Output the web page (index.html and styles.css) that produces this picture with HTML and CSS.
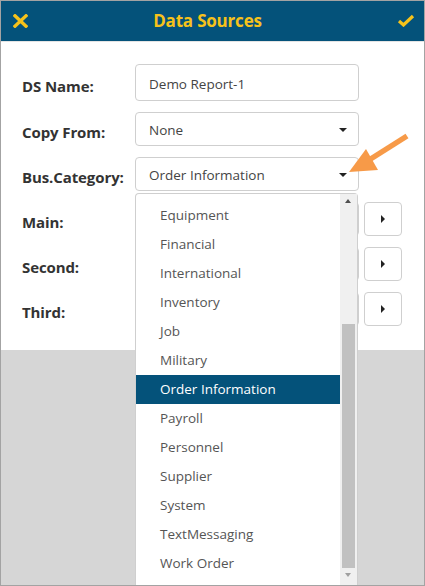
FILE: index.html
```html
<!DOCTYPE html>
<html>
<head>
<meta charset="utf-8">
<link rel="stylesheet" href="styles.css">
</head>
<body>
<div class="frame">
  <header class="bar">
    <svg class="bar-icon" width="15" height="14" viewBox="0 0 15 14"><path d="M2 1.8 L13 12.2 M13 1.8 L2 12.2" stroke="#f6c21b" stroke-width="3.3" stroke-linecap="square" fill="none"/></svg>
    <h1 class="title">Data Sources</h1>
    <svg class="bar-icon" width="18" height="13" viewBox="0 0 18 13"><path d="M2 7 L6.5 11 L16 2" stroke="#f6c21b" stroke-width="3.2" fill="none"/></svg>
  </header>
  <section class="panel">
    <div class="row">
      <label class="label">DS Name:</label>
      <div class="field tall">Demo Report-1</div>
    </div>
    <div class="row">
      <label class="label">Copy From:</label>
      <div class="field select">None<span class="caret"></span></div>
    </div>
    <div class="row">
      <label class="label">Bus.Category:</label>
      <div class="field select">Order Information<span class="caret"></span></div>
    </div>
    <div class="row">
      <label class="label">Main:</label>
      <div class="field"></div>
      <div class="btn"><span class="caret-r"></span></div>
    </div>
    <div class="row">
      <label class="label">Second:</label>
      <div class="field"></div>
      <div class="btn"><span class="caret-r"></span></div>
    </div>
    <div class="row">
      <label class="label">Third:</label>
      <div class="field"></div>
      <div class="btn"><span class="caret-r"></span></div>
    </div>
  </section>
  <div class="dropdown">
    <ul class="list">
      <li>Equipment</li>
      <li>Financial</li>
      <li>International</li>
      <li>Inventory</li>
      <li>Job</li>
      <li>Military</li>
      <li class="sel">Order Information</li>
      <li>Payroll</li>
      <li>Personnel</li>
      <li>Supplier</li>
      <li>System</li>
      <li>TextMessaging</li>
      <li>Work Order</li>
    </ul>
    <div class="scroll">
      <span class="sarrow up"></span>
      <div class="thumb"></div>
      <span class="sarrow down"></span>
    </div>
  </div>
  <svg class="pointer" width="70" height="50" viewBox="0 0 70 50">
    <line x1="66" y1="14" x2="28" y2="38" stroke="#f79a48" stroke-width="5.5"/>
    <polygon points="8,50 25,27 37,48" fill="#f79a48"/>
  </svg>
</div>
</body>
</html>
```
FILE: styles.css
```css
* { box-sizing: border-box; margin: 0; padding: 0; }
html, body { width: 425px; height: 586px; overflow: hidden; }
body { font-family: "Open Sans", "Noto Sans", sans-serif; }
.frame {
  position: relative;
  width: 425px;
  height: 586px;
  border: 1px solid #a3a3a3;
  background: #d6d6d6;
}
.bar {
  height: 41px;
  background: #04527a;
  border-bottom: 1px solid #e4e4e4;
  display: flex;
  align-items: center;
  justify-content: space-between;
  padding: 0 9px 1px 12px;
}
.bar-icon { display: block; }
.title {
  color: #f6c21b;
  font-size: 17px;
  font-weight: 700;
  letter-spacing: -0.2px;
  margin-right: 10px;
}
.panel {
  background: #fff;
  height: 308px;
  padding: 22px 0 0 21px;
  display: flex;
  flex-direction: column;
  gap: 11px;
}
.row {
  display: flex;
  align-items: center;
  height: 34px;
}
.row:first-child { height: 37px; }
.label {
  width: 113px;
  padding-top: 6px;
  font-size: 15px;
  font-weight: 700;
  color: #333;
  letter-spacing: -0.1px;
}
.field {
  position: relative;
  width: 224px;
  height: 34px;
  border: 1px solid #cfcfcf;
  border-radius: 4px;
  font-size: 13.5px;
  color: #444;
  display: flex;
  align-items: center;
  padding: 2px 0 0 13px;
}
.field.tall { height: 37px; }
.caret {
  position: absolute;
  right: 11px;
  top: 15px;
  border-left: 4px solid transparent;
  border-right: 4px solid transparent;
  border-top: 4px solid #222;
}
.btn {
  margin-left: 5px;
  width: 38px;
  height: 34px;
  border: 1px solid #cfcfcf;
  border-radius: 4px;
  display: flex;
  align-items: center;
  justify-content: center;
}
.caret-r {
  border-top: 4px solid transparent;
  border-bottom: 4px solid transparent;
  border-left: 4px solid #222;
}
.dropdown {
  position: absolute;
  left: 134px;
  top: 192px;
  width: 223px;
  bottom: 0;
  background: #fff;
  border: 1px solid #cfcfcf;
  border-bottom: none;
  border-radius: 4px 4px 0 0;
  display: flex;
  padding-top: 7px;
}
.list {
  list-style: none;
  width: 205px;
}
.list li {
  height: 29px;
  line-height: 29px;
  padding-left: 24px;
  font-size: 13.5px;
  color: #555;
}
.list li.sel {
  background: #04527a;
  color: #fff;
}
.scroll {
  position: absolute;
  right: 0;
  top: 0;
  bottom: 0;
  width: 17px;
  background: #f0f0f0;
}
.sarrow {
  position: absolute;
  left: 5px;
  border-left: 3.5px solid transparent;
  border-right: 3.5px solid transparent;
}
.sarrow.up { top: 5px; border-bottom: 4px solid #505050; }
.sarrow.down { bottom: 8px; border-top: 4px solid #a0a0a0; }
.thumb {
  position: absolute;
  left: 2px;
  right: 2px;
  top: 130px;
  bottom: 17px;
  background: #c1c1c1;
}
.pointer {
  position: absolute;
  left: 340px;
  top: 121px;
}
```
